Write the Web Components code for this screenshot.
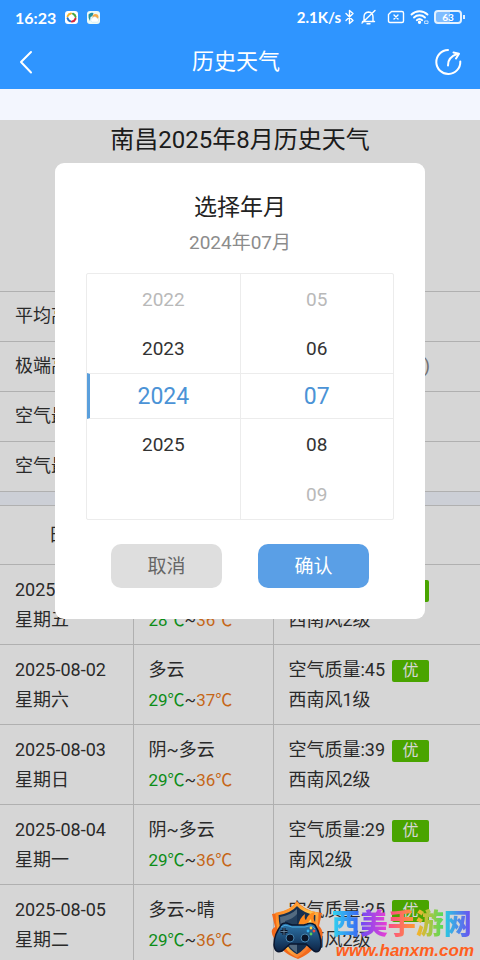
<!DOCTYPE html>
<html lang="zh-CN">
<head>
<meta charset="utf-8">
<meta name="viewport" content="width=device-width, initial-scale=1">
<title>历史天气</title>
<style>
  body {
    margin: 0;
    font-family: Roboto, "Noto Sans CJK SC", sans-serif;
    font-size: 18px;
    color: #333;
  }
</style>
</head>
<body>
<weather-app></weather-app>

<script>
/**
 * Creates a template element from a string.
 *
 * @param {string} html The markup.
 * @returns {HTMLTemplateElement} The template.
 */
const createTemplate = (html) => {
  const template = document.createElement('template')
  template.innerHTML = html
  return template
}

/**
 * Base class that attaches the shadow root and clones the template.
 */
class BaseElement extends HTMLElement {
  /**
   * Creates an instance of the current type.
   */
  constructor () {
    super()
    this.attachShadow({ mode: 'open' })
      .appendChild(this.constructor.template.content.cloneNode(true))
  }
}

// The phone's status bar.
customElements.define('status-bar', class extends BaseElement {
  static template = createTemplate(`
<style>
:host {
  display: flex;
  align-items: center;
  justify-content: space-between;
  height: 34px;
  padding: 0 15px;
  font-family: Lato, sans-serif;
  font-size: 16px;
  font-weight: 700;
}
div {
  display: flex;
  align-items: center;
}
.left {
  gap: 9px;
}
.right {
  gap: 4px;
  font-size: 15px;
}
svg {
  display: block;
  fill: none;
  stroke: currentColor;
  stroke-width: 1.4;
  stroke-linecap: round;
  stroke-linejoin: round;
}
.battery {
  box-sizing: border-box;
  width: 28px;
  height: 14px;
  margin-right: 3px;
  justify-content: center;
  border: 2px solid #e3f1ff;
  border-radius: 4px;
  background: linear-gradient(90deg, #7fbcff 60%, transparent 60%);
  font-size: 10px;
  line-height: 10px;
  position: relative;
}
.battery::after {
  content: "";
  position: absolute;
  right: -5px;
  top: 3px;
  width: 2px;
  height: 4px;
  background: #e3f1ff;
}
</style>
<div class="left">
  <span>16:23</span>
  <svg width="13" height="13" viewBox="0 0 13 13" stroke="none">
    <rect width="13" height="13" rx="3" fill="#fff" stroke="none"/>
    <path d="M2.6 5.2A4.2 4.2 0 0 1 6 2.4" stroke="#f5b52a" stroke-width="2"/>
    <path d="M8 2.7a4.2 4.2 0 0 1 2.6 3.2" stroke="#49a942" stroke-width="2"/>
    <path d="M10.4 7.8A4.2 4.2 0 0 1 7 10.5" stroke="#d7263d" stroke-width="2.2"/>
    <path d="M5.2 10.3a4.2 4.2 0 0 1-2.6-3" stroke="#2473c8" stroke-width="2"/>
  </svg>
  <svg width="13" height="13" viewBox="0 0 13 13">
    <rect width="13" height="13" rx="3" fill="#eefaf6" stroke="none"/>
    <path d="M1.5 3.500q2-2.500 5-1.500l-1 3-2 1-.5 4q-2-3-1.500-6.500z" fill="#23909c" stroke="none"/>
    <circle cx="8.500" cy="6" r="3" fill="#f9a944" stroke="none"/>
    <path d="M5 11a2 2 0 0 1 .3-3.800 2.600 2.600 0 0 1 4.700 0A2 2 0 0 1 10.500 11z" fill="#fff" stroke="#bfe3ef" stroke-width=".5"/>
  </svg>
</div>
<div class="right">
  <span>2.1K/s</span>
  <svg width="10" height="16" viewBox="0 0 10 16"><path d="M1 4.500l7 7-3.500 3V1.500L8 4.500l-7 7"/></svg>
  <svg width="24" height="16" viewBox="-2 0 24 16"><path d="M1.500 12.500h12M3 12.500V8q0-4.500 4.500-5 4.500.5 4.500 5v4.500M6 14.800h3M14 1.500L1 14"/></svg>
  <svg width="19" height="16" viewBox="0 0 19 16"><path d="M4.500 2.500H15q1.500 0 1.500 1.500v8q0 1.500-1.500 1.500H3q-1.500 0-1.500-1.500V5.500zM7 6l4 4M11 6l-4 4"/></svg>
  <svg width="20" height="16" viewBox="0 0 20 16"><path d="M1.500 5.500a11.500 11.500 0 0 1 16 0M4 8.500a8 8 0 0 1 11 0M6.800 11.200a4 4 0 0 1 5.400 0" stroke-width="1.900"/><circle cx="9.500" cy="13.300" r="1" fill="currentColor"/><path d="M15 12h3v2.500h-3z" stroke-width=".7"/></svg>
  <div class="battery">63</div>
</div>
`)
})

// Blue bar with back button, title and refresh button.
customElements.define('nav-bar', class extends BaseElement {
  static template = createTemplate(`
<style>
:host {
  display: flex;
  align-items: center;
  justify-content: space-between;
  height: 55px;
  padding: 0 16px;
}
h1 {
  margin: 0;
  font-size: 22px;
  font-weight: 400;
  line-height: 30px;
}
button {
  display: block;
  padding: 0;
  border: 0;
  background: none;
  color: inherit;
}
svg {
  display: block;
  fill: none;
  stroke: currentColor;
  stroke-width: 2;
  stroke-linecap: round;
  stroke-linejoin: round;
}
</style>
<button type="button" aria-label="返回">
  <svg width="24" height="28" viewBox="0 0 24 28"><path d="M15 4L5 14l10 10.500"/></svg>
</button>
<h1><slot></slot></h1>
<button type="button" aria-label="刷新">
  <svg width="32" height="28" viewBox="0 0 32 28"><path d="M16 2A12 12 0 1 0 28.300 13.500M16 17.500q-.5-8 9-11.500M21.500 4.500l5.500 1.300-3 4.700"/></svg>
</button>
`)
})

// Summary of the whole month.
customElements.define('month-summary', class extends BaseElement {
  static template = createTemplate(`
<style>
:host {
  display: block;
}
header {
  min-height: 171px;
}
h2 {
  margin: 0;
  font-size: 24px;
  font-weight: 400;
  line-height: 40px;
  text-align: center;
  color: #222;
}
p {
  display: flex;
  justify-content: space-between;
  box-sizing: border-box;
  height: 50px;
  margin: 0;
  padding: 0 50px 0 15px;
  border-top: 1px solid #d2d2d2;
  line-height: 48px;
}
small {
  font-size: 18px;
  color: #888;
}
</style>
<header><h2>南昌2025年8月历史天气</h2></header>
<p>平均高温</p>
<p>极端高温<small>(08-02)</small></p>
<p>空气最好</p>
<p>空气最差</p>
`)
})

// Table with one row for each day.
customElements.define('day-table', class extends BaseElement {
  static template = createTemplate(`
<style>
:host {
  display: block;
  padding-top: 13px;
  background: #f4f7ff;
  border-top: 1px solid #d2d2d2;
}
table {
  width: 100%;
  border-collapse: collapse;
  table-layout: fixed;
  background: #fff;
  line-height: 30px;
}
col:nth-child(1) {
  width: 133px;
}
col:nth-child(2) {
  width: 140px;
}
th {
  height: 58px;
  padding: 0;
  font-weight: 400;
  border-top: 1px solid #d2d2d2;
}
td {
  padding: 10px 0 9px 15px;
  border-top: 1px solid #d2d2d2;
  white-space: nowrap;
}
td + td {
  border-left: 1px solid #d2d2d2;
}
.temp {
  font-size: 17px;
}
.low {
  color: #0fa81c;
}
.high {
  color: #ec7a1c;
}
mark {
  display: inline-block;
  width: 37px;
  margin-left: 7px;
  border-radius: 2px;
  background: #58c400;
  color: #fff;
  font-size: 16px;
  line-height: 22px;
  text-align: center;
}
</style>
<table>
  <colgroup><col><col><col></colgroup>
  <thead><tr><th>日期</th><th>天气</th><th>空气</th></tr></thead>
  <tbody></tbody>
</table>
`)

  #days = [
    ['2025-08-01', '星期五', '多云', 28, 36, 42, '西南风2级'],
    ['2025-08-02', '星期六', '多云', 29, 37, 45, '西南风1级'],
    ['2025-08-03', '星期日', '阴~多云', 29, 36, 39, '西南风2级'],
    ['2025-08-04', '星期一', '阴~多云', 29, 36, 29, '南风2级'],
    ['2025-08-05', '星期二', '多云~晴', 29, 36, 25, '西南风2级']
  ]

  /**
   * Fills the table when the element is added to the DOM.
   */
  connectedCallback () {
    this.shadowRoot.querySelector('tbody').innerHTML = this.#days.map(([date, week, sky, low, high, air, wind]) => `
      <tr>
        <td>${date}<br>${week}</td>
        <td>${sky}<br><span class="temp"><span class="low">${low}℃</span>~<span class="high">${high}℃</span></span></td>
        <td>空气质量:${air}<mark>优</mark><br>${wind}</td>
      </tr>`).join('')
  }
})

// One column of the picker, a group of radio buttons.
customElements.define('picker-column', class extends BaseElement {
  static template = createTemplate(`
<style>
:host {
  display: block;
  flex: 1;
}
:host(:not(:first-child)) {
  border-left: 1px solid #ececec;
}
label {
  display: flex;
  align-items: center;
  justify-content: center;
  box-sizing: border-box;
  height: 49px;
  font-size: 19px;
  color: #333;
}
input {
  appearance: none;
  width: 0;
  height: 0;
  margin: 0;
}
.far {
  height: 50px;
  color: #b9b9b9;
}
.selected {
  height: 46px;
  border: solid #ececec;
  border-width: 1px 0;
  font-size: 23px;
  color: #4b93d6;
}
.selected + label {
  height: 50px;
}
:host([marked]) .selected {
  border-left: 3px solid #5a9fdc;
  padding-right: 3px;
}
</style>
<div role="radiogroup"></div>
`)

  /**
   * Builds the options from the values attribute.
   */
  connectedCallback () {
    const group = this.shadowRoot.querySelector('div')
    group.setAttribute('aria-label', this.getAttribute('name'))
    this.getAttribute('values').split(',').forEach((value, index) => {
      const label = document.createElement('label')
      label.className = index === 2 ? 'selected' : index % 4 === 0 ? 'far' : ''
      const input = document.createElement('input')
      input.type = 'radio'
      input.name = 'value'
      input.value = value
      input.checked = index === 2
      label.append(input, value)
      group.appendChild(label)
    })
  }
})

// Dialog for choosing year and month.
customElements.define('month-dialog', class extends BaseElement {
  static template = createTemplate(`
<style>
:host {
  display: block;
  box-sizing: border-box;
  width: 77%;
  padding: 28px 31px 31px;
  border-radius: 9px;
  background: #fff;
  text-align: center;
}
h2 {
  margin: 0;
  font-size: 23px;
  font-weight: 400;
  line-height: 34px;
  color: #222;
}
p {
  margin: 3px 0 16px;
  font-size: 19px;
  line-height: 29px;
  color: #8c8c8c;
}
.picker {
  display: flex;
  box-sizing: border-box;
  height: 247px;
  border: 1px solid #ececec;
  border-radius: 2px;
  overflow: hidden;
}
.buttons {
  display: flex;
  justify-content: space-between;
  margin: 24px 25px 0;
}
button {
  width: 43%;
  height: 44px;
  padding: 0 0 3px;
  border: 0;
  border-radius: 10px;
  background: #dedede;
  font: inherit;
  font-size: 19px;
  color: #666;
}
.confirm {
  background: #5a9fe6;
  color: #fff;
}
</style>
<h2>选择年月</h2>
<p>2024年07月</p>
<div class="picker">
  <picker-column name="年" values="2022,2023,2024,2025" marked></picker-column>
  <picker-column name="月" values="05,06,07,08,09"></picker-column>
</div>
<div class="buttons">
  <button type="button">取消</button>
  <button type="button" class="confirm">确认</button>
</div>
`)
})

// Logo of the site in the lower right corner.
customElements.define('site-mark', class extends BaseElement {
  static template = createTemplate(`
<style>
:host {
  display: flex;
  align-items: flex-end;
  gap: 7px;
  font-family: "Liberation Sans", "Noto Sans CJK SC", sans-serif;
  font-weight: 700;
}
svg {
  display: block;
}
.name {
  font-size: 28px;
  font-weight: 900;
  line-height: 34px;
}
.name span {
  background: linear-gradient(90deg, var(--from), var(--to));
  -webkit-background-clip: text;
  background-clip: text;
  color: transparent;
}
.url {
  padding-left: 4px;
  font-size: 17px;
  font-style: italic;
  line-height: 18px;
  color: #ff5f20;
}
</style>
<svg width="54" height="60" viewBox="0 0 54 60">
  <defs>
    <linearGradient id="fire" x1="0" y1="0" x2="1" y2="1"><stop offset="0" stop-color="#ff7a1a"/><stop offset=".5" stop-color="#ffc24a"/><stop offset="1" stop-color="#f4511e"/></linearGradient>
    <linearGradient id="pad" x1="0" y1="0" x2="0" y2="1"><stop offset="0" stop-color="#2f78ad"/><stop offset="1" stop-color="#0d2344"/></linearGradient>
  </defs>
  <path d="M3 38Q-2 30 4 27L1 14l6-1q13-3 19-12 7 9 19 11l6 1-3 13q6 6 2 14l-2-2q-4 14-21 21Q9 53 5 38z" fill="#f26a1c"/>
  <path d="M6 14q13-2 20-10 7 8 20 10 0 31-20 42Q7 46 6 14z" fill="#17304f" stroke="url(#fire)" stroke-width="3"/>
  <path d="M9 17q11-2 17-8v44Q10 43 9 17z" fill="#536a80"/>
  <path d="M14 21q8-2 12-7v18H14z" fill="#243f5d"/>
  <path d="M27 27q1-9 7-13-1 5 1 6 2-7 9-8-3 8 1 11l-1 6H27z" fill="#ff8a1e"/>
  <path d="M33 26q2-4 3-2 3-4 4-5 0 4 2 7z" fill="#ffe071"/>
  <path d="M11 24q4-2 7 0l3 1h12l3-1q4-2 8 1 6 10 6 20-1 9-7 6l-8-7H19l-8 7q-7 3-8-6 0-11 8-21z" fill="url(#pad)" stroke="#0a1730" stroke-width="1.500"/>
  <path d="M10 27q4-3 8-1l3 1h13l4-1q4-1 6 3" fill="none" stroke="#4aa9df" stroke-width="1"/>
  <path d="M13 28v7M9.500 31.500h7" stroke="#0a1528" stroke-width="3"/>
  <path d="M13 28v7M9.500 31.500h7" stroke="#7394ad" stroke-width=".8"/>
  <circle cx="19" cy="38" r="4" fill="#0b1528" stroke="#4584b0"/>
  <circle cx="34" cy="38" r="4" fill="#0b1528" stroke="#4584b0"/>
  <circle cx="40" cy="28" r="1.400" fill="#ffd34a"/><circle cx="37" cy="31" r="1.400" fill="#35b1ef"/>
  <circle cx="43" cy="31" r="1.400" fill="#f04e38"/><circle cx="40" cy="34" r="1.400" fill="#5bd15b"/>
</svg>
<div>
  <div class="name"><span style="--from:#2fd6f0;--to:#3b63f3">西</span><span style="--from:#6b4bf5;--to:#ee3fd2">美</span><span style="--from:#fb4a8c;--to:#ff9a2e">手</span><span style="--from:#ffb02a;--to:#4fdc5c">游</span><span style="--from:#27cfe0;--to:#7048f2">网</span></div>
  <div class="url">www.hanxm.com</div>
</div>
`)
})

// The whole page.
customElements.define('weather-app', class extends BaseElement {
  static template = createTemplate(`
<style>
:host {
  display: flex;
  flex-direction: column;
  height: 100vh;
  position: relative;
  overflow: hidden;
}
.top {
  background: #2f95ff;
  color: #fff;
}
.strip {
  flex: none;
  height: 31px;
  background: #f3f6fe;
}
main {
  flex: 1;
  min-height: 0;
  position: relative;
  overflow: hidden;
}
.mask {
  position: absolute;
  inset: 0;
  display: flex;
  align-items: flex-start;
  justify-content: center;
  padding-top: 43px;
  background: rgba(0, 0, 0, .16);
}
site-mark {
  position: absolute;
  right: 6px;
  bottom: 0;
}
</style>
<div class="top">
  <status-bar></status-bar>
  <nav-bar>历史天气</nav-bar>
</div>
<div class="strip"></div>
<main>
  <month-summary></month-summary>
  <day-table></day-table>
  <div class="mask"><month-dialog role="dialog" aria-label="选择年月"></month-dialog></div>
</main>
<site-mark></site-mark>
`)
})
</script>
</body>
</html>
